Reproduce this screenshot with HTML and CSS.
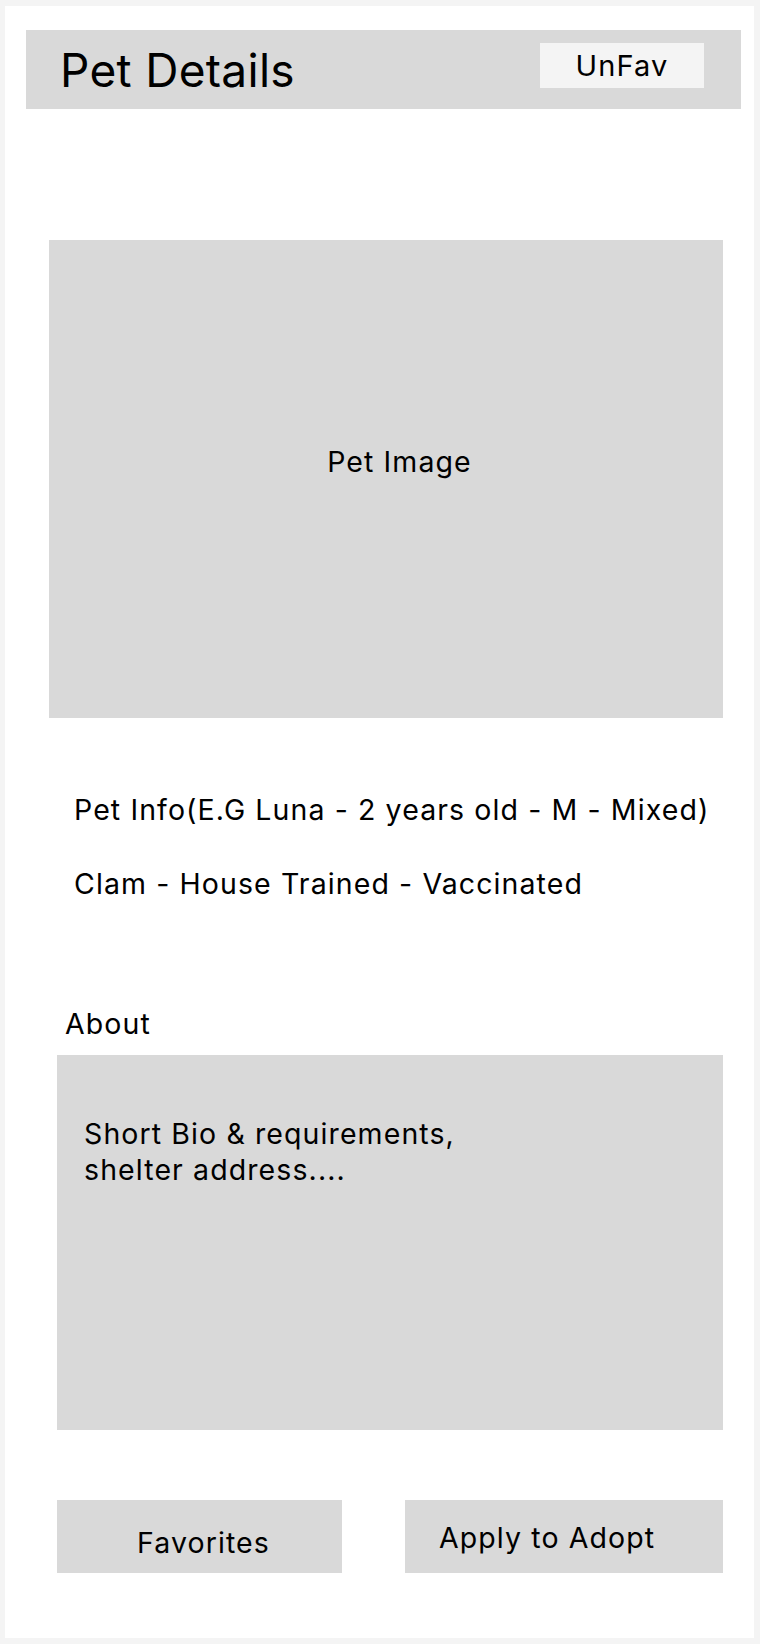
FILE: index.html
```html
<!DOCTYPE html>
<html>
<head>
<meta charset="utf-8">
<link rel="stylesheet" href="styles.css">
</head>
<body>
<div class="frame">
  <header class="topbar">
    <h1 class="title">Pet Details</h1>
    <button class="unfav">UnFav</button>
  </header>
  <div class="pet-image">Pet Image</div>
  <div class="info">
    <p class="info-line">Pet Info(E.G Luna - 2 years old - M - Mixed)</p>
    <p class="info-line second">Clam - House Trained - Vaccinated</p>
  </div>
  <h2 class="about-label">About</h2>
  <div class="about-box">
    <p class="bio">Short Bio &amp; requirements,<br>shelter address....</p>
  </div>
  <div class="actions">
    <button class="btn fav">Favorites</button>
    <button class="btn apply">Apply to Adopt</button>
  </div>
</div>
</body>
</html>
```
FILE: styles.css
```css
* { box-sizing: border-box; }
html, body { margin: 0; padding: 0; }
body {
  background: #f4f4f4;
  font-family: Inter, "Noto Sans", sans-serif;
  color: #000;
  width: 760px;
  height: 1644px;
  padding: 6px 6px 6px 5px;
}
.frame {
  background: #fff;
  height: 1632px;
  padding-top: 24px;
  display: flex;
  flex-direction: column;
}
.topbar {
  margin: 0 13px 0 21px;
  height: 79px;
  background: #d9d9d9;
  display: flex;
  align-items: flex-start;
  justify-content: space-between;
}
.title {
  margin: 12px 0 0 34px;
  font-size: 46px;
  font-weight: 400;
  line-height: 56px;
  letter-spacing: 0.3px;
}
.unfav {
  margin: 13px 37px 0 0;
  width: 164px;
  height: 45px;
  background: #f4f4f4;
  border: none;
  font-family: inherit;
  font-size: 29px;
  letter-spacing: 1.1px;
  color: #000;
  padding: 0;
}
.pet-image {
  margin: 131px 0 0 44px;
  width: 674px;
  height: 478px;
  background: #d9d9d9;
  display: flex;
  align-items: center;
  justify-content: center;
  font-size: 28.5px;
  letter-spacing: 1.1px;
  padding: 0 0 36px 27px;
}
.info { margin: 75px 0 0 69px; }
.info-line {
  margin: 0;
  font-size: 28.5px;
  letter-spacing: 1.1px;
  line-height: 34px;
}
.info-line.second { margin-top: 40px; }
.about-label {
  margin: 106px 0 0 60px;
  font-size: 28.5px;
  font-weight: 400;
  letter-spacing: 1.1px;
  line-height: 34px;
}
.about-box {
  margin: 14px 0 0 52px;
  width: 666px;
  height: 375px;
  background: #d9d9d9;
  padding: 61px 0 0 27px;
}
.bio {
  margin: 0;
  font-size: 28.5px;
  letter-spacing: 1.1px;
  line-height: 36px;
}
.actions {
  margin: 70px 0 0 52px;
  display: flex;
  gap: 63px;
}
.btn {
  height: 73px;
  background: #d9d9d9;
  border: none;
  font-family: inherit;
  font-size: 28.5px;
  letter-spacing: 1.1px;
  color: #000;
  padding: 0;
}
.fav { width: 285px; padding-top: 11px; padding-left: 8px; }
.apply { width: 318px; text-align: left; padding-left: 34px; padding-top: 2px; }
```
